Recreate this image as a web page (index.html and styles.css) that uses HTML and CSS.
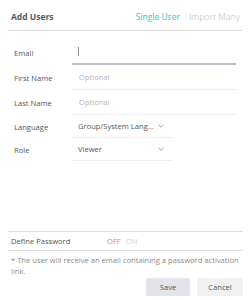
FILE: index.html
```html
<!DOCTYPE html>
<html>
<head>
<meta charset="utf-8">
<link rel="stylesheet" href="styles.css">
</head>
<body>
<div class="modal">
  <div class="header">
    <div class="title">Add Users</div>
    <div class="tabs">
      <span class="tab active">Single User</span>
      <span class="tab">Import Many</span>
    </div>
  </div>
  <div class="form">
    <div class="row first">
      <div class="label">Email</div>
      <div class="field focus"><span class="caret"></span></div>
    </div>
    <div class="row">
      <div class="label">First Name</div>
      <div class="field"><span class="ph">Optional</span></div>
    </div>
    <div class="row">
      <div class="label">Last Name</div>
      <div class="field"><span class="ph">Optional</span></div>
    </div>
    <div class="row sel">
      <div class="label">Language</div>
      <div class="field select"><span class="val">Group/System Lang...</span><svg class="chev" width="6" height="4" viewBox="0 0 6 4"><path d="M0.5 0.8 L3 3.2 L5.5 0.8" fill="none" stroke="#999" stroke-width="0.9"/></svg></div>
    </div>
    <div class="row sel">
      <div class="label">Role</div>
      <div class="field select"><span class="val">Viewer</span><svg class="chev" width="6" height="4" viewBox="0 0 6 4"><path d="M0.5 0.8 L3 3.2 L5.5 0.8" fill="none" stroke="#999" stroke-width="0.9"/></svg></div>
    </div>
  </div>
  <div class="password">
    <div class="plabel">Define Password</div>
    <div class="toggle"><span class="off">OFF</span><span class="on">ON</span></div>
  </div>
  <div class="note">* The user will receive an email containing a password activation link.</div>
  <div class="actions">
    <button class="btn save">Save</button>
    <button class="btn cancel">Cancel</button>
  </div>
</div>
</body>
</html>
```
FILE: styles.css
```css
* { box-sizing: border-box; }
html, body { margin: 0; padding: 0; background: #fff; }
body {
  font-family: "Open Sans", "Noto Sans", sans-serif;
  width: 251px;
  height: 300px;
  overflow: hidden;
}
.modal {
  padding: 0 8px 4px 8px;
  height: 300px;
  display: flex;
  flex-direction: column;
}
.header {
  height: 31px;
  border-bottom: 1px solid #dcdcdc;
  display: flex;
  align-items: center;
  justify-content: space-between;
  padding: 2px 3px 0 3px;
}
.title {
  font-size: 8.5px;
  font-weight: 700;
  color: #555a60;
}
.tabs { display: flex; gap: 9px; }
.tab { font-size: 8.5px; color: #d2d2d2; }
.tab.active { color: #36c3d0; }
.form {
  padding-left: 6px;
  display: flex;
  flex-direction: column;
}
.row {
  display: grid;
  grid-template-columns: 58px 164px;
  height: 25px;
  align-items: stretch;
}
.row.first { margin-top: 9px; }
.row.sel { height: 23px; grid-template-columns: 58px 100px; }
.label {
  font-size: 7.6px;
  color: #555;
  display: flex;
  align-items: center;
}
.field {
  border-bottom: 1px solid #eeeff2;
  display: flex;
  align-items: center;
  padding-left: 7px;
  font-size: 7.6px;
}
.field.focus { border-bottom: 2px solid #b9bdc7; padding-left: 6px; }
.caret {
  display: block;
  width: 1px;
  height: 9px;
  background: #8a8f99;
}
.ph { color: #b5b5b5; }
.select { justify-content: space-between; padding-left: 6px; padding-right: 8px; }
.val { color: #555; }
.chev { display: block; }
.password {
  margin-top: auto;
  border-top: 1px solid #dcdcdc;
  border-bottom: 1px solid #dcdcdc;
  height: 20px;
  display: flex;
  align-items: center;
  padding-left: 3px;
}
.plabel { font-size: 7.6px; color: #555; width: 96px; }
.toggle { display: flex; gap: 5px; font-size: 7.6px; }
.off { color: #f47a7a; }
.on { color: #d6d6d6; }
.note {
  margin-top: 4px;
  padding-left: 3px;
  font-size: 7.6px;
  line-height: 11px;
  color: #8a8a8a;
}
.actions {
  display: flex;
  justify-content: flex-end;
  gap: 7px;
  margin-top: 1px;
}
.btn {
  font-family: "Open Sans", "Noto Sans", sans-serif;
  font-size: 7.6px;
  color: #555;
  border: none;
  border-radius: 2px;
  height: 18px;
  padding: 0;
}
.save { width: 44px; background: #e2e4e9; }
.cancel { width: 46px; background: #f0f1f3; }
```
